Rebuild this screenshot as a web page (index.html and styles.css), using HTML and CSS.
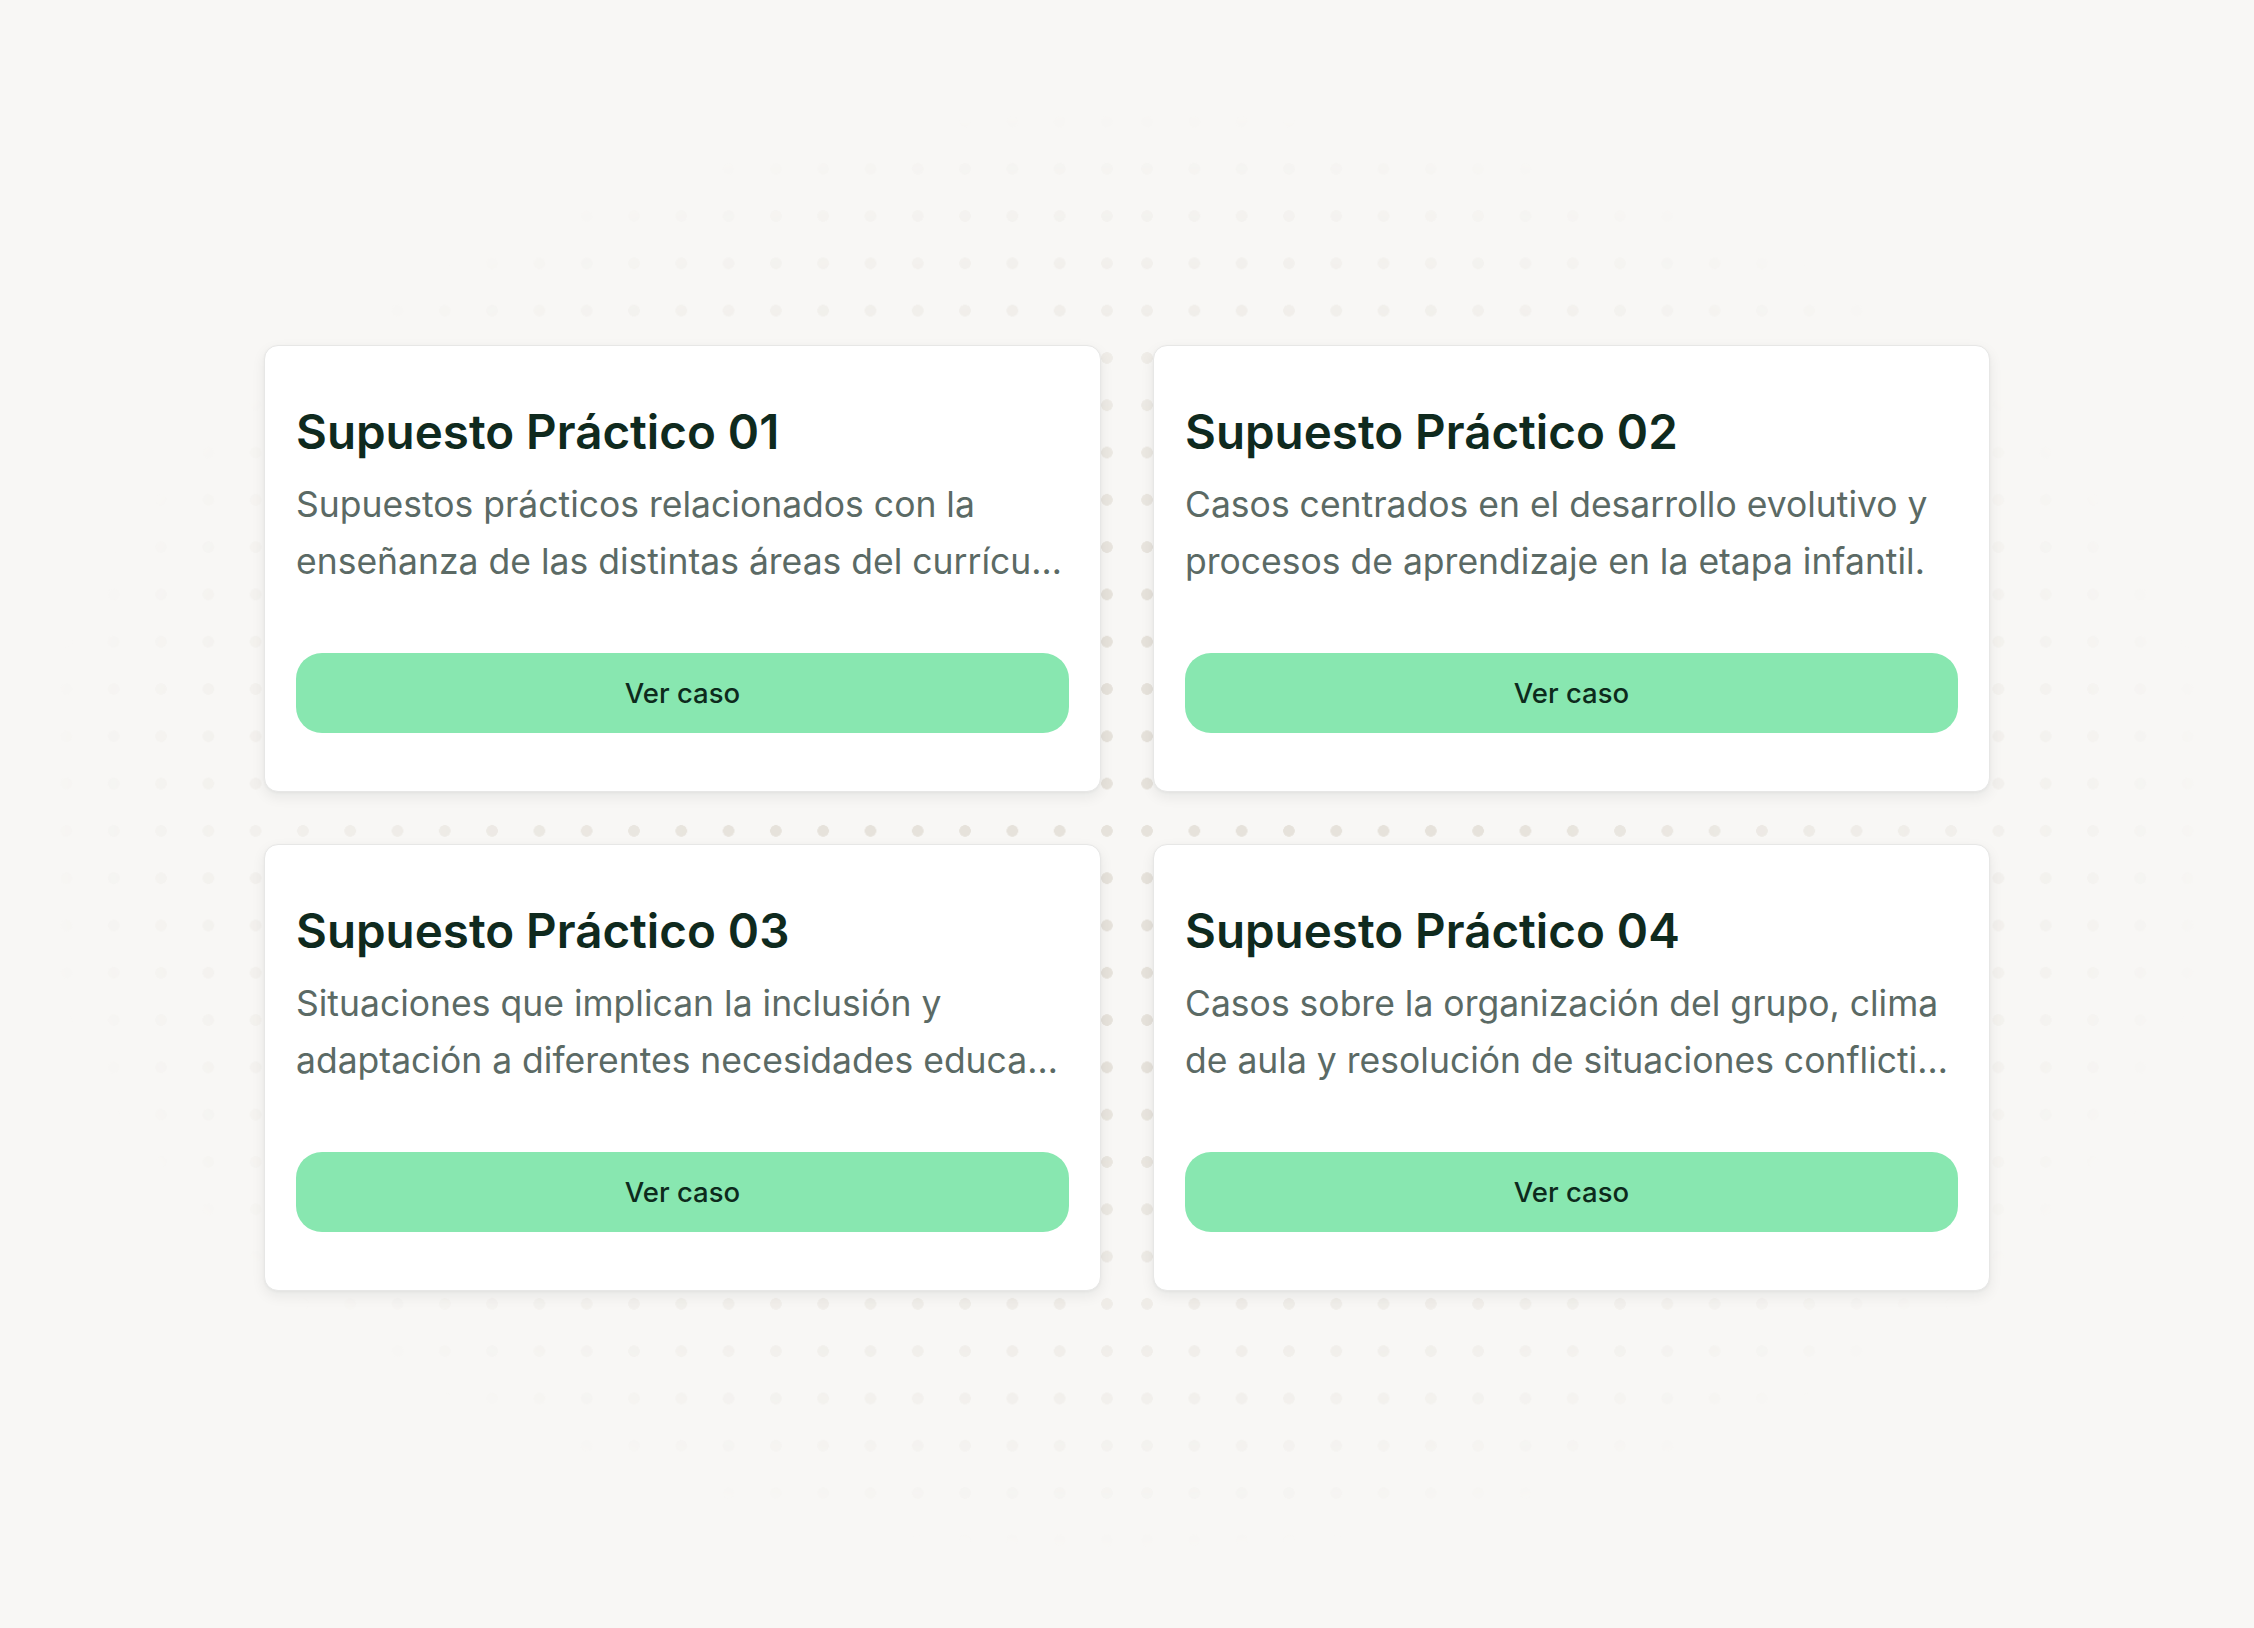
FILE: index.html
```html
<!DOCTYPE html>
<html lang="es">
<head>
<meta charset="utf-8">
<title>Supuestos prácticos</title>
<link rel="stylesheet" href="styles.css">
</head>
<body>
<div class="page">
  <div class="dots" aria-hidden="true">
    <div class="dots-half dots-left"></div>
    <div class="dots-half dots-right"></div>
  </div>
  <main class="grid">
    <article class="card">
      <h2 class="card-title">Supuesto Práctico 01</h2>
      <p class="card-text"><span class="line">Supuestos prácticos relacionados con la</span><span class="line">enseñanza de las distintas áreas del currículo de Educación Infantil.</span></p>
      <button class="card-btn" type="button">Ver caso</button>
    </article>
    <article class="card">
      <h2 class="card-title">Supuesto Práctico 02</h2>
      <p class="card-text"><span class="line">Casos centrados en el desarrollo evolutivo y</span><span class="line">procesos de aprendizaje en la etapa infantil.</span></p>
      <button class="card-btn" type="button">Ver caso</button>
    </article>
    <article class="card">
      <h2 class="card-title">Supuesto Práctico 03</h2>
      <p class="card-text"><span class="line">Situaciones que implican la inclusión y</span><span class="line">adaptación a diferentes necesidades educativas especiales.</span></p>
      <button class="card-btn" type="button">Ver caso</button>
    </article>
    <article class="card">
      <h2 class="card-title">Supuesto Práctico 04</h2>
      <p class="card-text"><span class="line">Casos sobre la organización del grupo, clima</span><span class="line">de aula y resolución de situaciones conflictivas.</span></p>
      <button class="card-btn" type="button">Ver caso</button>
    </article>
  </main>
</div>
</body>
</html>
```

FILE: styles.css
```css
html, body {
  margin: 0;
  padding: 0;
  background: #f8f7f5;
}

body {
  font-family: Inter, "Noto Sans", "Liberation Sans", sans-serif;
}

.page {
  position: relative;
  min-height: 100vh;
  box-sizing: border-box;
  padding-top: 8px;
  display: flex;
  align-items: center;
  justify-content: center;
  overflow: hidden;
}

.dots {
  position: absolute;
  inset: 0;
  display: flex;
  -webkit-mask-image: radial-gradient(ellipse 1250px 820px at 50% 51%, #000 30%, rgba(0,0,0,0) 88%);
  mask-image: radial-gradient(ellipse 1250px 820px at 50% 51%, #000 30%, rgba(0,0,0,0) 88%);
  z-index: 0;
}

.dots-half {
  flex: 1;
  background-image: radial-gradient(circle at center, #e6e2db 5.5px, rgba(230,226,219,0) 6px);
  background-size: 47.3px 47.3px;
}

.dots-left {
  background-position: right -3.6px top 3.2px;
}

.dots-right {
  background-position: left -3.6px top 3.2px;
}

.grid {
  position: relative;
  z-index: 1;
  display: grid;
  grid-template-columns: 837px 837px;
  gap: 52px;
}

.card {
  background: #ffffff;
  border: 1.5px solid #e7e7e6;
  border-radius: 14px;
  box-shadow: 0 5px 14px rgba(20, 30, 25, 0.07), 0 1px 3px rgba(20, 30, 25, 0.04);
  padding: 58px 31px 58px;
  display: flex;
  flex-direction: column;
}

.card-title {
  margin: 0;
  font-size: 47.5px;
  line-height: 55px;
  font-weight: 600;
  color: #0f2a1e;
}

.card-text {
  margin: 18px 0 0;
  font-size: 35.5px;
  line-height: 56.5px;
  font-weight: 400;
  color: #5b6a65;
  height: 113px;
}

.line {
  display: block;
  white-space: nowrap;
  overflow: hidden;
  text-overflow: ellipsis;
}

.card-btn {
  margin-top: 63px;
  height: 80px;
  border: none;
  border-radius: 26px;
  background: #88e7b0;
  color: #0d2a1c;
  font-family: inherit;
  font-size: 27.5px;
  font-weight: 500;
  cursor: pointer;
}
```
